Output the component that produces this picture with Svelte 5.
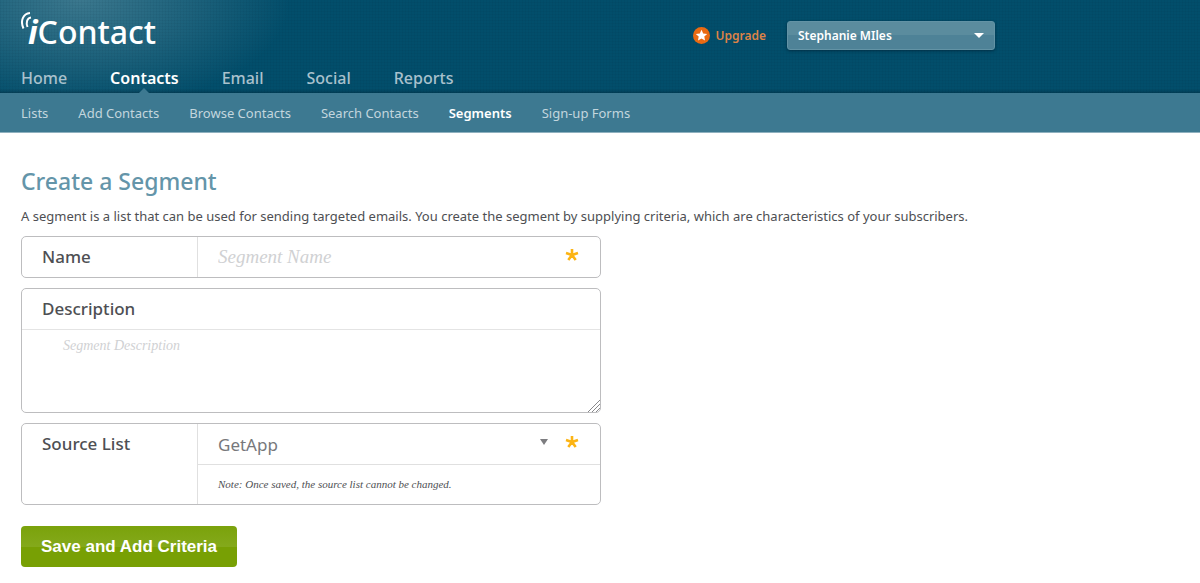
<script lang="ts">
    const sections = ["Home", "Contacts", "Email", "Social", "Reports"];
    const pages = [
        "Lists",
        "Add Contacts",
        "Browse Contacts",
        "Search Contacts",
        "Segments",
        "Sign-up Forms",
    ];

    let section = "Contacts";
    let page = "Segments";

    let name = "";
    let description = "";
    let sourceList = "GetApp";
</script>

<header class="header">
    <div class="inner top">
        <a class="logo" href="#home" aria-label="iContact">
            <svg class="waves" width="11" height="20" viewBox="0 0 11 20" aria-hidden="true">
                <path d="M9 1C2 1.500 -1 9 2.500 16.500" />
                <path d="M10 5.500C6 6 4.800 10.500 6.500 15" />
            </svg>
            <span class="logo-text"><b>i</b>Contact</span>
        </a>

        <div class="account">
            <a class="upgrade" href="#upgrade">
                <svg width="17" height="17" viewBox="0 0 17 17" aria-hidden="true">
                    <circle cx="8.500" cy="8.500" r="8.500" fill="#ea6a12" />
                    <path
                        fill="#fff"
                        d="M8.500 2.800l1.700 3.600 4 .5-2.900 2.700.7 3.900-3.500-1.900L5 13.500l.7-3.900-2.900-2.700 4-.5z"
                    />
                </svg>
                Upgrade
            </a>
            <div class="user">
                <select aria-label="Account">
                    <option>Stephanie MIles</option>
                </select>
                <svg width="10" height="5" viewBox="0 0 10 5" aria-hidden="true">
                    <path d="M0 0h10L5 5z" fill="#fff" />
                </svg>
            </div>
        </div>
    </div>

    <nav class="inner sections" aria-label="Main">
        {#each sections as item}
            <a href="#{item.toLowerCase()}" class:active={item === section}>{item}</a>
        {/each}
    </nav>
</header>

<nav class="subnav" aria-label={section}>
    <div class="inner pages">
        {#each pages as item}
            <a href="#{item.toLowerCase().replace(' ', '-')}" class:active={item === page}>{item}</a>
        {/each}
    </div>
</nav>

<main>
    <h1>Create a Segment</h1>
    <p class="intro">
        A segment is a list that can be used for sending targeted emails. You create the segment by
        supplying criteria, which are characteristics of your subscribers.
    </p>

    <form on:submit|preventDefault>
        <div class="box row">
            <label class="side" for="name">Name</label>
            <div class="control">
                <input id="name" type="text" placeholder="Segment Name" required bind:value={name} />
                <svg class="star" width="14" height="14" viewBox="0 0 14 14" aria-hidden="true">
                    <path d="M7 7V1M7 7L1 5M7 7l6-2M7 7l-3.700 5M7 7l3.700 5" />
                </svg>
            </div>
        </div>

        <div class="box">
            <label class="heading" for="description">Description</label>
            <textarea
                id="description"
                placeholder="Segment Description"
                bind:value={description}
            ></textarea>
            <svg class="grip" width="13" height="13" viewBox="0 0 13 13" aria-hidden="true">
                <path d="M1 13L13 1M5 13l8-8M9 13l4-4" />
            </svg>
        </div>

        <div class="box row">
            <label class="side" for="source">Source List</label>
            <div class="source">
                <div class="control">
                    <select id="source" required bind:value={sourceList}>
                        <option>GetApp</option>
                    </select>
                    <svg class="arrow" width="8" height="6" viewBox="0 0 8 6" aria-hidden="true">
                        <path d="M0 0h8L4 6z" fill="#7d7d80" />
                    </svg>
                    <svg class="star" width="14" height="14" viewBox="0 0 14 14" aria-hidden="true">
                        <path d="M7 7V1M7 7L1 5M7 7l6-2M7 7l-3.700 5M7 7l3.700 5" />
                    </svg>
                </div>
                <p class="note">Note: Once saved, the source list cannot be changed.</p>
            </div>
        </div>

        <button type="submit">Save and Add Criteria</button>
    </form>
</main>

<style>
    :global(body) {
        margin: 0;
        background: #ffffff;
        font-family: "Noto Sans", "Open Sans", sans-serif;
        color: #4e4f53;
    }

    a {
        text-decoration: none;
    }

    .inner {
        box-sizing: border-box;
        max-width: 995px;
        padding-left: 21px;
    }

    .header {
        background:
            repeating-linear-gradient(0deg, rgba(0, 30, 50, 0.05) 0 1px, transparent 1px 3px),
            repeating-linear-gradient(90deg, rgba(0, 30, 50, 0.05) 0 1px, transparent 1px 3px),
            linear-gradient(to top, rgba(0, 30, 45, 0.35), transparent 4px),
            radial-gradient(ellipse 210px 110px at 80px 0, #3b788e, transparent),
            #024e6b;
    }

    .top {
        display: flex;
        justify-content: space-between;
        align-items: flex-start;
        height: 64px;
    }

    .logo {
        display: flex;
        padding-top: 12px;
        color: #ffffff;
    }

    .waves {
        fill: none;
        stroke: #ffffff;
        stroke-width: 2;
        margin-right: -4px;
    }

    .logo-text {
        font-size: 32px;
        font-weight: 500;
        line-height: 40px;
    }

    .logo-text b {
        font-style: italic;
    }

    .account {
        display: flex;
        align-items: center;
        gap: 21px;
        padding-top: 21px;
    }

    .upgrade {
        display: flex;
        align-items: center;
        gap: 5px;
        font-size: 12px;
        font-weight: 600;
        color: #dd8347;
    }

    .user {
        display: flex;
        align-items: center;
        position: relative;
    }

    .user select {
        appearance: none;
        width: 208px;
        height: 29px;
        padding: 0 30px 0 10px;
        border: 1px solid #6393a5;
        border-radius: 3px;
        background: linear-gradient(#5b8c9e 50%, #4e8297 50%);
        box-shadow: 0 1px 3px rgba(0, 20, 35, 0.5);
        font-family: inherit;
        font-size: 12px;
        font-weight: 600;
        color: #ffffff;
    }

    .user svg {
        position: absolute;
        right: 11px;
        pointer-events: none;
    }

    .sections {
        display: flex;
        gap: 43px;
        font-size: 16px;
        font-weight: 500;
        line-height: 29px;
    }

    .sections a {
        position: relative;
        color: #a9c1cd;
    }

    .sections a.active {
        font-weight: 600;
        color: #ffffff;
    }

    .sections a.active::after {
        content: "";
        position: absolute;
        left: 50%;
        bottom: 0;
        margin-left: -5px;
        border: 5px solid transparent;
        border-top: 0;
        border-bottom-color: #3d7991;
    }

    .subnav {
        background: #3d7991;
        border-bottom: 1px solid #8fb1bf;
    }

    .pages {
        display: flex;
        gap: 30px;
        padding-top: 2px;
        font-size: 13px;
        line-height: 37px;
    }

    .pages a {
        color: #c3d6de;
    }

    .pages a.active {
        font-weight: 600;
        color: #ffffff;
    }

    main {
        padding: 32px 21px 16px;
    }

    h1 {
        margin: 0;
        font-size: 23px;
        font-weight: 500;
        line-height: 32px;
        color: #6495a9;
    }

    .intro {
        margin: 9px 0 10px;
        font-size: 13px;
        line-height: 20px;
    }

    form {
        max-width: 580px;
    }

    .box {
        position: relative;
        box-sizing: border-box;
        margin-bottom: 10px;
        border: 1px solid #bdbdbf;
        border-radius: 5px;
        background: #ffffff;
    }

    .row {
        display: flex;
    }

    label {
        font-size: 17px;
        font-weight: 500;
        line-height: 40px;
    }

    .side {
        flex: 0 0 175px;
        box-sizing: border-box;
        padding-left: 20px;
    }

    .heading {
        display: block;
        padding-left: 20px;
        border-bottom: 1px solid #e4e4e4;
    }

    .control {
        display: flex;
        flex: 1;
        align-items: center;
        padding-right: 21px;
        border-left: 1px solid #e0e0e0;
    }

    input,
    .control select,
    textarea {
        box-sizing: border-box;
        border: none;
        outline: none;
        background: transparent;
    }

    input {
        flex: 1;
        min-width: 0;
        height: 40px;
        padding: 0 20px;
        font-family: "Liberation Serif", "Times New Roman", serif;
        font-size: 19px;
        font-style: italic;
    }

    input::placeholder,
    textarea::placeholder {
        color: #d0d1d3;
        opacity: 1;
    }

    textarea {
        display: block;
        width: 100%;
        height: 82px;
        padding: 8px 41px;
        resize: none;
        font-family: "Liberation Serif", "Times New Roman", serif;
        font-size: 14px;
        font-style: italic;
    }

    .grip {
        position: absolute;
        right: 0;
        bottom: 0;
        fill: none;
        stroke: #88888b;
        pointer-events: none;
    }

    .star {
        margin-bottom: 5px;
        fill: none;
        stroke: #fcb414;
        stroke-width: 2.600;
    }

    .source {
        flex: 1;
    }

    .control select {
        appearance: none;
        flex: 1;
        height: 40px;
        padding: 0 20px;
        font-family: inherit;
        font-size: 17px;
        color: #77787b;
    }

    .arrow {
        margin: 0 17px 5px 0;
    }

    .note {
        margin: 0;
        padding-left: 20px;
        border-top: 1px solid #e0e0e0;
        border-left: 1px solid #e0e0e0;
        font-family: "Liberation Serif", "Times New Roman", serif;
        font-size: 11px;
        font-style: italic;
        line-height: 39px;
    }

    button {
        margin-top: 11px;
        padding: 0 20px;
        border: none;
        border-radius: 4px;
        background: linear-gradient(#7aa20b, #84a91b 50%, #78a004 50%);
        font-family: "Liberation Sans", Arial, sans-serif;
        font-size: 17px;
        font-weight: 700;
        line-height: 41px;
        color: #ffffff;
    }
</style>
